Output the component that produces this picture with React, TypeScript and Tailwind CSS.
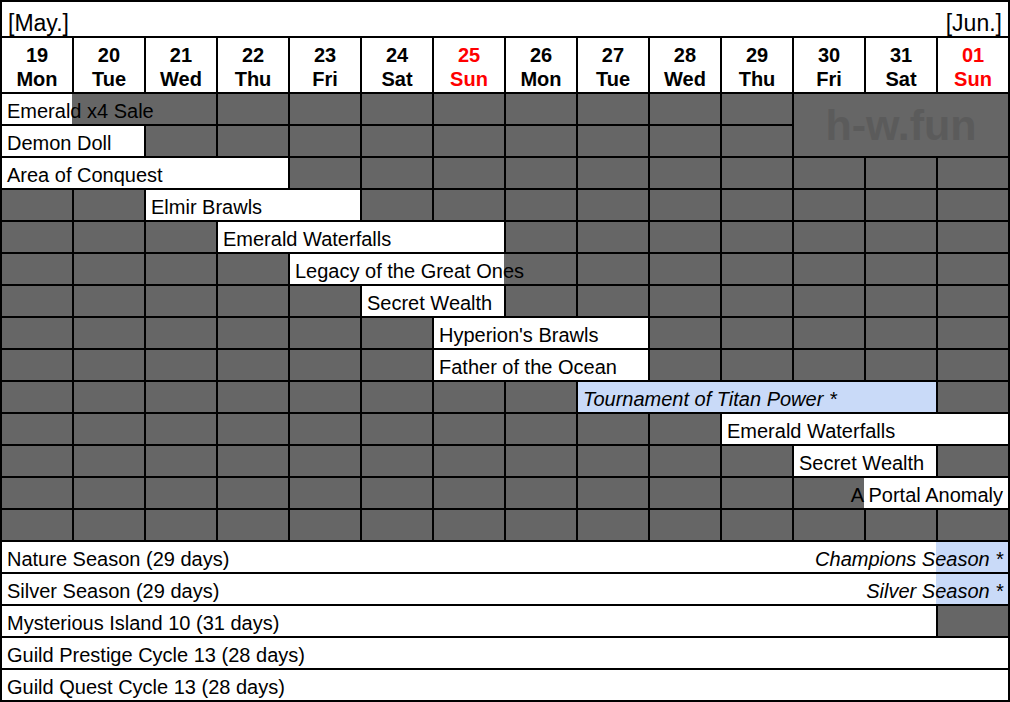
import type { ReactNode } from 'react';

const spans: Record<number, string> = {
  1: 'col-span-1',
  2: 'col-span-2',
  3: 'col-span-3',
  4: 'col-span-4',
  5: 'col-span-5',
  13: 'col-span-13',
  14: 'col-span-14',
};

const GREY = 'bg-[#666666]';
const WHITE = 'bg-white';
const BLUE = 'bg-[#c9daf8]';

function Cell({
  span = 1,
  bg = GREY,
  className = '',
  children,
}: {
  span?: number;
  bg?: string;
  className?: string;
  children?: ReactNode;
}) {
  return (
    <div className={`${spans[span]} ${bg} flex items-end px-[5px] pb-px whitespace-nowrap ${className}`}>
      {children}
    </div>
  );
}

// n plain grey day cells
function greys(n: number, key: string) {
  return Array.from({ length: n }, (_, i) => <Cell key={`${key}-${i}`} />);
}

const days = [
  ['19', 'Mon'], ['20', 'Tue'], ['21', 'Wed'], ['22', 'Thu'], ['23', 'Fri'], ['24', 'Sat'], ['25', 'Sun'],
  ['26', 'Mon'], ['27', 'Tue'], ['28', 'Wed'], ['29', 'Thu'], ['30', 'Fri'], ['31', 'Sat'], ['01', 'Sun'],
];

export default function App() {
  return (
    <div className="w-[1010px] h-[702px] bg-black p-[2px] grid grid-cols-[repeat(14,70px)] grid-rows-[34px_54px_repeat(19,30px)] gap-[2px] font-['Liberation_Sans',Arial,sans-serif] text-[20px] leading-[24px] text-black">
      {/* month header */}
      <Cell span={14} bg={WHITE} className="justify-between text-[23px] pb-[2px] !px-[6px]">
        <span>[May.]</span>
        <span>[Jun.]</span>
      </Cell>

      {/* days */}
      {days.map(([d, w]) => (
        <Cell key={d} bg={WHITE} className={`justify-center text-center font-bold ${w === 'Sun' ? 'text-[#ff0000]' : ''}`}>
          <div>
            {d}
            <br />
            {w}
          </div>
        </Cell>
      ))}

      {/* events */}
      <Cell span={3} bg="bg-[linear-gradient(to_right,#ffffff_70px,#666666_70px)]">Emerald x4 Sale</Cell>
      {greys(8, 'r1')}
      <div className="col-span-3 row-span-2 bg-[#666666] flex items-center justify-center font-bold text-[43px] leading-none text-[#5b5b5b]">
        h-w.fun
      </div>

      <Cell span={2} bg={WHITE}>Demon Doll</Cell>
      {greys(9, 'r2')}

      <Cell span={4} bg={WHITE}>Area of Conquest</Cell>
      {greys(10, 'r3')}

      {greys(2, 'r4a')}
      <Cell span={3} bg={WHITE}>Elmir Brawls</Cell>
      {greys(9, 'r4b')}

      {greys(3, 'r5a')}
      <Cell span={4} bg={WHITE}>Emerald Waterfalls</Cell>
      {greys(7, 'r5b')}

      {greys(4, 'r6a')}
      <Cell span={4} bg="bg-[linear-gradient(to_right,#ffffff_214px,#666666_214px)]">Legacy of the Great Ones</Cell>
      {greys(6, 'r6b')}

      {greys(5, 'r7a')}
      <Cell span={2} bg={WHITE}>Secret Wealth</Cell>
      {greys(7, 'r7b')}

      {greys(6, 'r8a')}
      <Cell span={3} bg={WHITE}>Hyperion's Brawls</Cell>
      {greys(5, 'r8b')}

      {greys(6, 'r9a')}
      <Cell span={3} bg={WHITE}>Father of the Ocean</Cell>
      {greys(5, 'r9b')}

      {greys(8, 'r10a')}
      <Cell span={5} bg={BLUE} className="italic">Tournament of Titan Power *</Cell>
      {greys(1, 'r10b')}

      {greys(10, 'r11')}
      <Cell span={4} bg={WHITE}>Emerald Waterfalls</Cell>

      {greys(11, 'r12a')}
      <Cell span={2} bg={WHITE}>Secret Wealth</Cell>
      {greys(1, 'r12b')}

      {greys(11, 'r13')}
      <Cell span={3} bg="bg-[linear-gradient(to_right,#666666_70px,#ffffff_70px)]" className="justify-end">
        A Portal Anomaly
      </Cell>

      {greys(14, 'r14')}

      {/* seasons */}
      <Cell span={14} bg="bg-[linear-gradient(to_right,#ffffff_calc(100%_-_72px),#c9daf8_calc(100%_-_72px))]" className="justify-between">
        <span>Nature Season (29 days)</span>
        <span className="italic">Champions Season *</span>
      </Cell>
      <Cell span={14} bg="bg-[linear-gradient(to_right,#ffffff_calc(100%_-_72px),#c9daf8_calc(100%_-_72px))]" className="justify-between">
        <span>Silver Season (29 days)</span>
        <span className="italic">Silver Season *</span>
      </Cell>
      <Cell span={13} bg={WHITE}>Mysterious Island 10 (31 days)</Cell>
      <Cell />
      <Cell span={14} bg={WHITE}>Guild Prestige Cycle 13 (28 days)</Cell>
      <Cell span={14} bg={WHITE}>Guild Quest Cycle 13 (28 days)</Cell>
    </div>
  );
}
